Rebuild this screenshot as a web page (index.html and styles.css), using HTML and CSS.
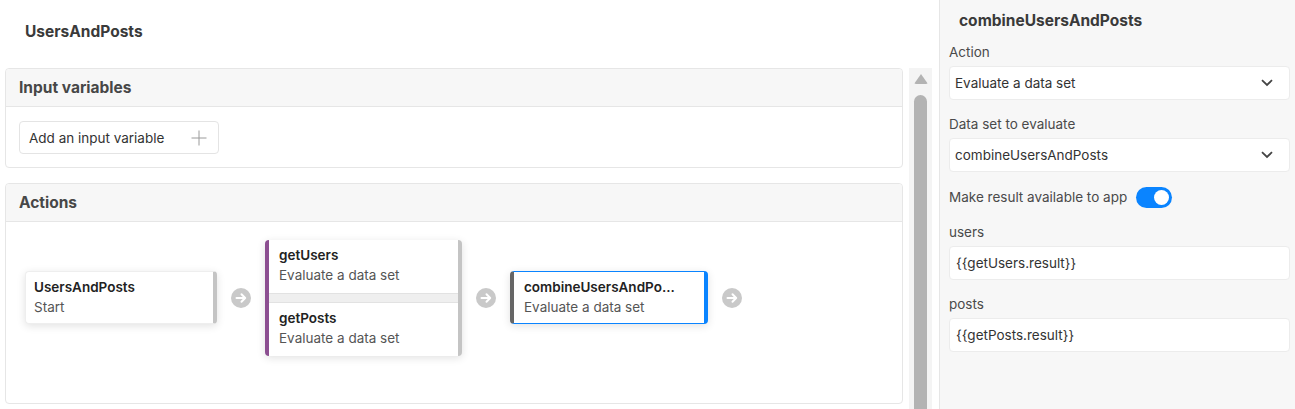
FILE: index.html
```html
<!DOCTYPE html>
<html>
<head>
<meta charset="utf-8">
<link rel="stylesheet" href="styles.css">
</head>
<body>
<div class="app">
  <main class="main">
    <div class="page-title">UsersAndPosts</div>
    <div class="main-row">
      <div class="panels">
        <section class="panel">
          <div class="panel-head">Input variables</div>
          <div class="panel-body input-body">
            <button class="add-btn">
              <span>Add an input variable</span>
              <svg class="plus" width="16" height="16" viewBox="0 0 16 16"><path d="M8 0.5V15.5M0.5 8H15.5" stroke="#9a9a9a" stroke-width="1" fill="none"/></svg>
            </button>
          </div>
        </section>
        <section class="panel">
          <div class="panel-head">Actions</div>
          <div class="panel-body actions-body">
            <div class="flow">
              <div class="card card-start">
                <div class="card-title">UsersAndPosts</div>
                <div class="card-sub">Start</div>
              </div>
              <div class="arrow-col"><span class="arrow"><svg width="20" height="20" viewBox="0 0 20 20"><circle cx="10" cy="10" r="10" fill="#c9c9c9"/><path d="M5.5 10H14M10.5 6.3L14.2 10L10.5 13.7" stroke="#fff" stroke-width="2" fill="none" stroke-linecap="round" stroke-linejoin="round"/></svg></span></div>
              <div class="group">
                <div class="group-item">
                  <div class="card-title">getUsers</div>
                  <div class="card-sub">Evaluate a data set</div>
                </div>
                <div class="group-sep"></div>
                <div class="group-item">
                  <div class="card-title">getPosts</div>
                  <div class="card-sub">Evaluate a data set</div>
                </div>
              </div>
              <div class="arrow-col"><span class="arrow"><svg width="20" height="20" viewBox="0 0 20 20"><circle cx="10" cy="10" r="10" fill="#c9c9c9"/><path d="M5.5 10H14M10.5 6.3L14.2 10L10.5 13.7" stroke="#fff" stroke-width="2" fill="none" stroke-linecap="round" stroke-linejoin="round"/></svg></span></div>
              <div class="card card-selected">
                <div class="card-title">combineUsersAndPo...</div>
                <div class="card-sub">Evaluate a data set</div>
              </div>
              <div class="arrow-col"><span class="arrow"><svg width="20" height="20" viewBox="0 0 20 20"><circle cx="10" cy="10" r="10" fill="#c9c9c9"/><path d="M5.5 10H14M10.5 6.3L14.2 10L10.5 13.7" stroke="#fff" stroke-width="2" fill="none" stroke-linecap="round" stroke-linejoin="round"/></svg></span></div>
            </div>
          </div>
        </section>
      </div>
      <div class="scrollbar">
        <div class="scroll-up"></div>
        <div class="scroll-thumb"></div>
      </div>
    </div>
  </main>
  <aside class="side">
    <div class="side-title">combineUsersAndPosts</div>
    <div class="field">
      <div class="label">Action</div>
      <div class="box select"><span>Evaluate a data set</span><svg width="12" height="8" viewBox="0 0 12 8"><path d="M1 1.2L6 6L11 1.2" stroke="#444" stroke-width="1.8" fill="none"/></svg></div>
    </div>
    <div class="field">
      <div class="label">Data set to evaluate</div>
      <div class="box select"><span>combineUsersAndPosts</span><svg width="12" height="8" viewBox="0 0 12 8"><path d="M1 1.2L6 6L11 1.2" stroke="#444" stroke-width="1.8" fill="none"/></svg></div>
    </div>
    <div class="field toggle-row">
      <span class="label">Make result available to app</span>
      <span class="toggle"><span class="knob"></span></span>
    </div>
    <div class="field">
      <div class="label">users</div>
      <div class="box input">{{getUsers.result}}</div>
    </div>
    <div class="field">
      <div class="label">posts</div>
      <div class="box input">{{getPosts.result}}</div>
    </div>
  </aside>
</div>
</body>
</html>
```
FILE: styles.css
```css
* { box-sizing: border-box; }
html, body { margin: 0; padding: 0; background: #fff; }
body {
  font-family: Inter, "Noto Sans", "Liberation Sans", sans-serif;
  font-size: 13.5px;
  color: #333;
  width: 1295px;
  height: 409px;
  overflow: hidden;
}
.app { display: flex; height: 409px; }
.main { width: 939px; flex: none; display: flex; flex-direction: column; }
.page-title {
  height: 68px;
  padding: 21px 0 0 25px;
  font-size: 15.5px;
  font-weight: 700;
  line-height: 22px;
  color: #3a3a3a;
}
.main-row { display: flex; flex: 1; min-height: 0; }
.panels {
  width: 898px;
  margin-left: 5px;
  display: flex;
  flex-direction: column;
  gap: 15px;
}
.panel {
  border: 1px solid #e6e6e6;
  border-radius: 4px;
  background: #fff;
}
.panel-head {
  height: 38px;
  padding: 0 13px;
  background: #f7f7f7;
  border-bottom: 1px solid #e6e6e6;
  border-radius: 4px 4px 0 0;
  font-size: 15.5px;
  font-weight: 700;
  line-height: 37px;
  color: #474747;
}
.input-body { padding: 14px 13px 13px; }
.add-btn {
  display: flex;
  align-items: center;
  justify-content: space-between;
  width: 200px;
  height: 33px;
  padding: 0 11px 0 9px;
  border: 1px solid #e4e4e4;
  border-radius: 4px;
  background: #fff;
  font-family: inherit;
  font-size: 13.5px;
  color: #333;
}
.actions-body { height: 181px; padding: 18px 0 0 19px; }
.flow { display: flex; align-items: center; }
.card {
  background: #fff;
  border-radius: 4px;
  box-shadow: 0 2px 9px rgba(0,0,0,0.12);
  height: 53px;
  padding: 6px 8px 0 9px;
}
.card-title { font-weight: 600; line-height: 20px; color: #222; white-space: nowrap; }
.card-sub { line-height: 20px; color: #555; white-space: nowrap; }
.card-start {
  width: 192px;
  border: 1px solid #eeeeee;
  border-right: 4px solid #c4c4c4;
  padding-left: 8px;
  padding-top: 5px;
  margin-top: -1px;
}
.arrow-col { width: 48px; display: flex; justify-content: center; }
.arrow { display: block; width: 20px; height: 20px; }
.arrow svg { display: block; }
.group {
  width: 197px;
  background: #fff;
  border-radius: 4px;
  border-left: 4px solid #8c4f91;
  border-right: 4px solid #c4c4c4;
  box-shadow: 0 2px 9px rgba(0,0,0,0.12);
}
.group-item { height: 53px; padding: 5px 8px 0 10px; }
.group-sep {
  height: 10px;
  background: #efefef;
  border-top: 1px solid #e2e2e2;
  border-bottom: 1px solid #e2e2e2;
}
.card-selected {
  width: 198px;
  border: 1px solid #0a84ff;
  border-left: 4px solid #666;
  border-right: 4px solid #0a84ff;
  padding: 5px 8px 0 10px;
  margin-top: -1px;
}
.scrollbar {
  width: 23px;
  margin-left: 6px;
  background: #f4f4f4;
  display: flex;
  flex-direction: column;
  align-items: center;
  padding-top: 6px;
}
.scroll-up {
  width: 0;
  height: 0;
  border-left: 7px solid transparent;
  border-right: 7px solid transparent;
  border-bottom: 10px solid #b3b3b3;
  margin-left: 1px;
  border-radius: 2px;
}
.scroll-thumb {
  margin-top: 11px;
  width: 13px;
  flex: 1;
  background: #b3b3b3;
  border-radius: 7px 7px 0 0;
}
.side {
  width: 356px;
  flex: none;
  background: #f7f7f7;
  border-left: 1px solid #e6e6e6;
  padding: 11px 5px 0 9px;
}
.side-title {
  padding-left: 10px;
  font-size: 15.5px;
  font-weight: 700;
  line-height: 20px;
  color: #3a3a3a;
  margin-bottom: 11px;
}
.field { margin-bottom: 14px; }
.label { display: block; line-height: 20px; color: #4a4a4a; margin-bottom: 4px; }
.box {
  height: 34px;
  background: #fff;
  border: 1px solid #ececec;
  border-radius: 4px;
  display: flex;
  align-items: center;
  color: #333;
}
.select { justify-content: space-between; padding: 0 16px 0 5px; }
.select svg { display: block; }
.input { padding: 0 6px; }
.toggle-row { display: flex; align-items: center; height: 22px; gap: 9px; }
.toggle-row .label { margin-bottom: 0; }
.toggle {
  width: 36px;
  height: 21px;
  border-radius: 11px;
  background: #0a84ff;
  position: relative;
  display: block;
}
.knob {
  position: absolute;
  right: 3px;
  top: 3px;
  width: 15px;
  height: 15px;
  border-radius: 50%;
  background: #fff;
}
```
